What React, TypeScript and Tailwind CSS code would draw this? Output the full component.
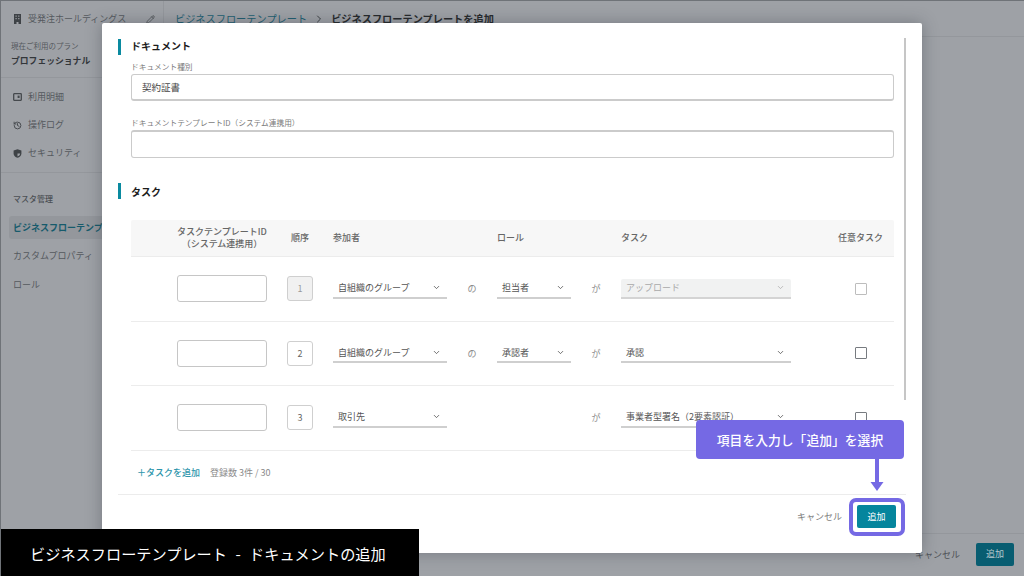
import React from "react";
import { ChevronDown, ChevronRight, Pencil, History } from "lucide-react";

const font = { fontFamily: '"Noto Sans CJK JP","Noto Sans",sans-serif' };

function Side({ icon, text }: { icon: React.ReactNode; text: string }) {
  return (
    <div className="flex items-center gap-[6px] pl-[12px] h-[28px] text-[9px] text-[#55595e]">
      {icon}
      <span>{text}</span>
    </div>
  );
}

function Select({ text, w, disabled }: { text: string; w: string; disabled?: boolean }) {
  return (
    <div className={`${w} h-[20px] flex items-center justify-between pl-[5px] pr-[6px] border-b-2 rounded-t-[2px] text-[9px] ${disabled ? "bg-[#f1f2f2] border-[#d4d4d4] text-[#a9a9a9]" : "border-[#cfcfcf] text-[#555]"}`}>
      <span className="whitespace-nowrap">{text}</span>
      <ChevronDown size={9} strokeWidth={2} className={disabled ? "text-[#aaa]" : "text-[#444]"} />
    </div>
  );
}

function Row({ n, part, role, roleOf, task, taskDisabled, dis, cbLight }: { n: string; part: string; role?: string; roleOf?: boolean; task: string; taskDisabled?: boolean; dis?: boolean; cbLight?: boolean }) {
  return (
    <div className="grid grid-cols-[46px_90px_20px_26px_20px_114px_50px_74px_50px_170px_102px] items-center h-[64.6px] border-b border-[#ececec]">
      <div />
      <div className="h-[27px] border border-[#c6c6c6] rounded-[3px] bg-white" />
      <div />
      <div className={`h-[25px] border border-[#cfcfcf] rounded-[3px] flex items-center justify-center text-[9px] ${dis ? "bg-[#f1f1f1] text-[#9a9a9a]" : "text-[#666]"}`}>{n}</div>
      <div />
      <Select text={part} w="w-[114px]" />
      <div className="text-center text-[9px] text-[#8a8a8a]">{roleOf ? "の" : ""}</div>
      {role ? <Select text={role} w="w-[74px]" /> : <div />}
      <div className="text-center text-[9px] text-[#8a8a8a]">が</div>
      <Select text={task} w="w-[170px]" disabled={taskDisabled} />
      <div className="flex justify-center pl-[38px]">
        <div className={`w-[12px] h-[12px] border-[1.5px] rounded-[1px] ${cbLight ? "border-[#bdbdbd]" : "border-[#777b80]"}`} />
      </div>
    </div>
  );
}

function Heading({ text, lifted }: { text: string; lifted?: boolean }) {
  return (
    <div className="flex items-center gap-[10px] h-[16px]">
      <div className="w-[3px] h-[16px] bg-[#0a8aa0]" />
      <div className={`text-[10px] leading-[14px] font-bold text-[#1c1c1c] ${lifted ? "mb-[2px]" : "mt-[1px]"}`}>{text}</div>
    </div>
  );
}

export default function App() {
  return (
    <div style={font} className="relative w-[1024px] h-[576px] overflow-hidden bg-[#9ea1a6] border-t border-l border-[#6f7378]">
      <div className="flex h-full">
        <aside className="w-[163px] shrink-0 border-r border-[#94979c]">
          <div className="flex items-center justify-between h-[36px] pl-[12px] pr-[8px] text-[9px] text-[#55595e]">
            <div className="flex items-center gap-[6px]">
              <svg width="9" height="10" viewBox="0 0 9 10" fill="#3e4246">
                <path d="M1 0h7v10H5.5V8h-2v2H1z" />
                <path d="M2.5 1.5h1.2v1.2H2.5zM5.2 1.5h1.2v1.2H5.2zM2.5 4h1.2v1.2H2.5zM5.2 4h1.2v1.2H5.2z" fill="#9ea1a6" />
              </svg>
              <span className="whitespace-nowrap">受発注ホールディングス</span>
            </div>
            <Pencil size={9} className="text-[#45494d]" />
          </div>
          <div className="pl-[10px] pt-[3px] h-[41px] border-b border-[#94979c]">
            <div className="text-[7.5px] leading-[12px] text-[#55595e]">現在ご利用のプラン</div>
            <div className="text-[8.8px] leading-[17px] font-bold text-[#33363a]">プロフェッショナル</div>
          </div>
          <div className="pt-[5px] pb-[5px] border-b border-[#94979c]">
            <Side text="利用明細" icon={<svg width="9" height="8" viewBox="0 0 9 8" fill="none" stroke="#45494d" strokeWidth="1.3"><rect x="0.7" y="0.7" width="7.6" height="6.6" rx="0.5" /><rect x="4.6" y="2.6" width="2" height="2.4" fill="#45494d" stroke="none" /></svg>} />
            <Side text="操作ログ" icon={<History size={9} strokeWidth={2.5} className="text-[#45494d]" />} />
            <Side text="セキュリティ" icon={<svg width="9" height="9" viewBox="0 0 9 9"><path d="M4.5 0.2 8.4 1.6V4.4C8.4 6.6 6.7 8.2 4.5 8.8 2.3 8.2 0.6 6.6 0.6 4.4V1.6Z" fill="#3e4246" /><path d="M4.5 1.5V4.5H7.2C7 6 5.9 7 4.5 7.5Z" fill="#9ea1a6" /></svg>} />
          </div>
          <div className="pl-[12px] pt-[20px] text-[8px] leading-[12px] font-medium text-[#4c5055]">マスタ管理</div>
          <div className="ml-[8px] mt-[11px] h-[23px] bg-[#94979c] rounded-l-[3px] pl-[4px] flex items-center text-[9px] font-bold text-[#175b6c] whitespace-nowrap overflow-hidden">ビジネスフローテンプレート</div>
          <div className="pl-[12px] h-[28px] mt-[3px] flex items-center text-[9px] text-[#55595e]">カスタムプロパティ</div>
          <div className="pl-[12px] h-[29px] flex items-center text-[9px] text-[#55595e]">ロール</div>
        </aside>
        <main className="flex-1 flex flex-col">
          <div className="h-[36px] border-b border-[#94979c] flex items-center pl-[11px] gap-[6px] text-[10.2px] whitespace-nowrap">
            <span className="text-[#215f72]">ビジネスフローテンプレート</span>
            <ChevronRight size={12} className="text-[#3c4044]" />
            <span className="font-bold text-[#26292c]">ビジネスフローテンプレートを追加</span>
          </div>
          <div className="flex-1" />
          <div className="h-[43px] border-t border-[#94979c] flex items-center justify-end pr-[10px] gap-[16px]">
            <span className="text-[9px] text-[#4c5055]">キャンセル</span>
            <div className="w-[38px] h-[23px] rounded-[2px] bg-[#085d71] flex items-center justify-center text-[9px] text-[#b9c9ce] mb-[2px]">追加</div>
          </div>
        </main>
      </div>

      {/* modal */}
      <div className="absolute left-[101px] top-[22px] w-[820px] h-[530px] bg-white rounded-[2px] shadow-[0_0_16px_rgba(40,45,55,0.35)]">
        <div className="absolute left-[802px] top-[15px] w-[2px] h-[362px] bg-[#c6c6c6]" />
        <div className="pl-[16px] pt-[16px] pr-[14px]">
          <Heading text="ドキュメント" lifted />
          <div className="pl-[13px]">
            <div className="mt-[6px] text-[7.7px] leading-[12px] text-[#7b7b7b]">ドキュメント種別</div>
            <div className="mt-[1px] w-[763px] h-[27px] border border-[#cbcbcb] border-b-2 rounded-[3px] pl-[10px] flex items-center text-[9.5px] text-[#444]">契約証書</div>
            <div className="mt-[16px] text-[7.7px] leading-[12px] text-[#7b7b7b]">ドキュメントテンプレートID（システム連携用）</div>
            <div className="mt-[1px] w-[763px] h-[28px] border border-[#cbcbcb] border-t-2 rounded-[3px]" />
          </div>
          <div className="mt-[25px]"><Heading text="タスク" /></div>
          <div className="ml-[13px] mt-[21px] w-[763px]">
            <div className="grid grid-cols-[46px_90px_20px_26px_20px_114px_50px_74px_50px_170px_102px] items-center h-[37px] pb-[1px] bg-[#f7f7f7] border-b border-[#ececec] text-[9px] font-medium text-[#666] rounded-t-[2px]">
              <div />
              <div className="text-center leading-[12px] whitespace-nowrap">タスクテンプレートID<br />（システム連携用）</div>
              <div />
              <div className="text-center whitespace-nowrap">順序</div>
              <div />
              <div>参加者</div>
              <div />
              <div>ロール</div>
              <div />
              <div>タスク</div>
              <div className="text-right pr-[10px] whitespace-nowrap">任意タスク</div>
            </div>
            <Row n="1" dis part="自組織のグループ" roleOf role="担当者" task="アップロード" taskDisabled cbLight />
            <Row n="2" part="自組織のグループ" roleOf role="承認者" task="承認" />
            <Row n="3" part="取引先" task="事業者型署名（2要素認証）" />
            <div className="flex items-center h-[43px] pl-[6px] gap-[10px] text-[9px] whitespace-nowrap">
              <span className="text-[#2d95ab] font-medium">＋タスクを追加</span>
              <span className="text-[#8a8a8a]">登録数 3件 / 30</span>
            </div>
          </div>
          <div className="w-[788px] border-t border-[#ececec]" />
          <div className="flex items-center justify-end pr-[10px] gap-[15px] w-[788px] pt-[10px]">
            <span className="text-[9px] text-[#7d7d7d]">キャンセル</span>
            <div className="w-[39px] h-[23px] rounded-[2px] bg-[#05859d] flex items-center justify-center text-[9px] text-white">追加</div>
          </div>
        </div>
      </div>

      {/* callout */}
      <div className="absolute left-[695px] top-[419px] w-[208px] h-[39px] rounded-[4px] bg-[#7569e4] flex items-center justify-center text-[12.8px] font-medium text-white whitespace-nowrap">項目を入力し「追加」を選択</div>
      <svg className="absolute left-[869px] top-[458px]" width="14" height="33" viewBox="0 0 14 33">
        <rect x="5" y="0" width="4" height="24" fill="#7569e4" />
        <path d="M0.5 23 H13.5 L7 32 Z" fill="#7569e4" />
      </svg>
      <div className="absolute left-[848px] top-[497px] w-[56px] h-[38px] border-[4px] border-[#7569e4] rounded-[7px]" />

      {/* caption */}
      <div className="absolute left-[-1px] top-[528px] w-[419px] h-[48px] bg-black flex items-center pl-[30px] text-[15.2px] [word-spacing:5px] text-white whitespace-nowrap">ビジネスフローテンプレート - ドキュメントの追加</div>
    </div>
  );
}
